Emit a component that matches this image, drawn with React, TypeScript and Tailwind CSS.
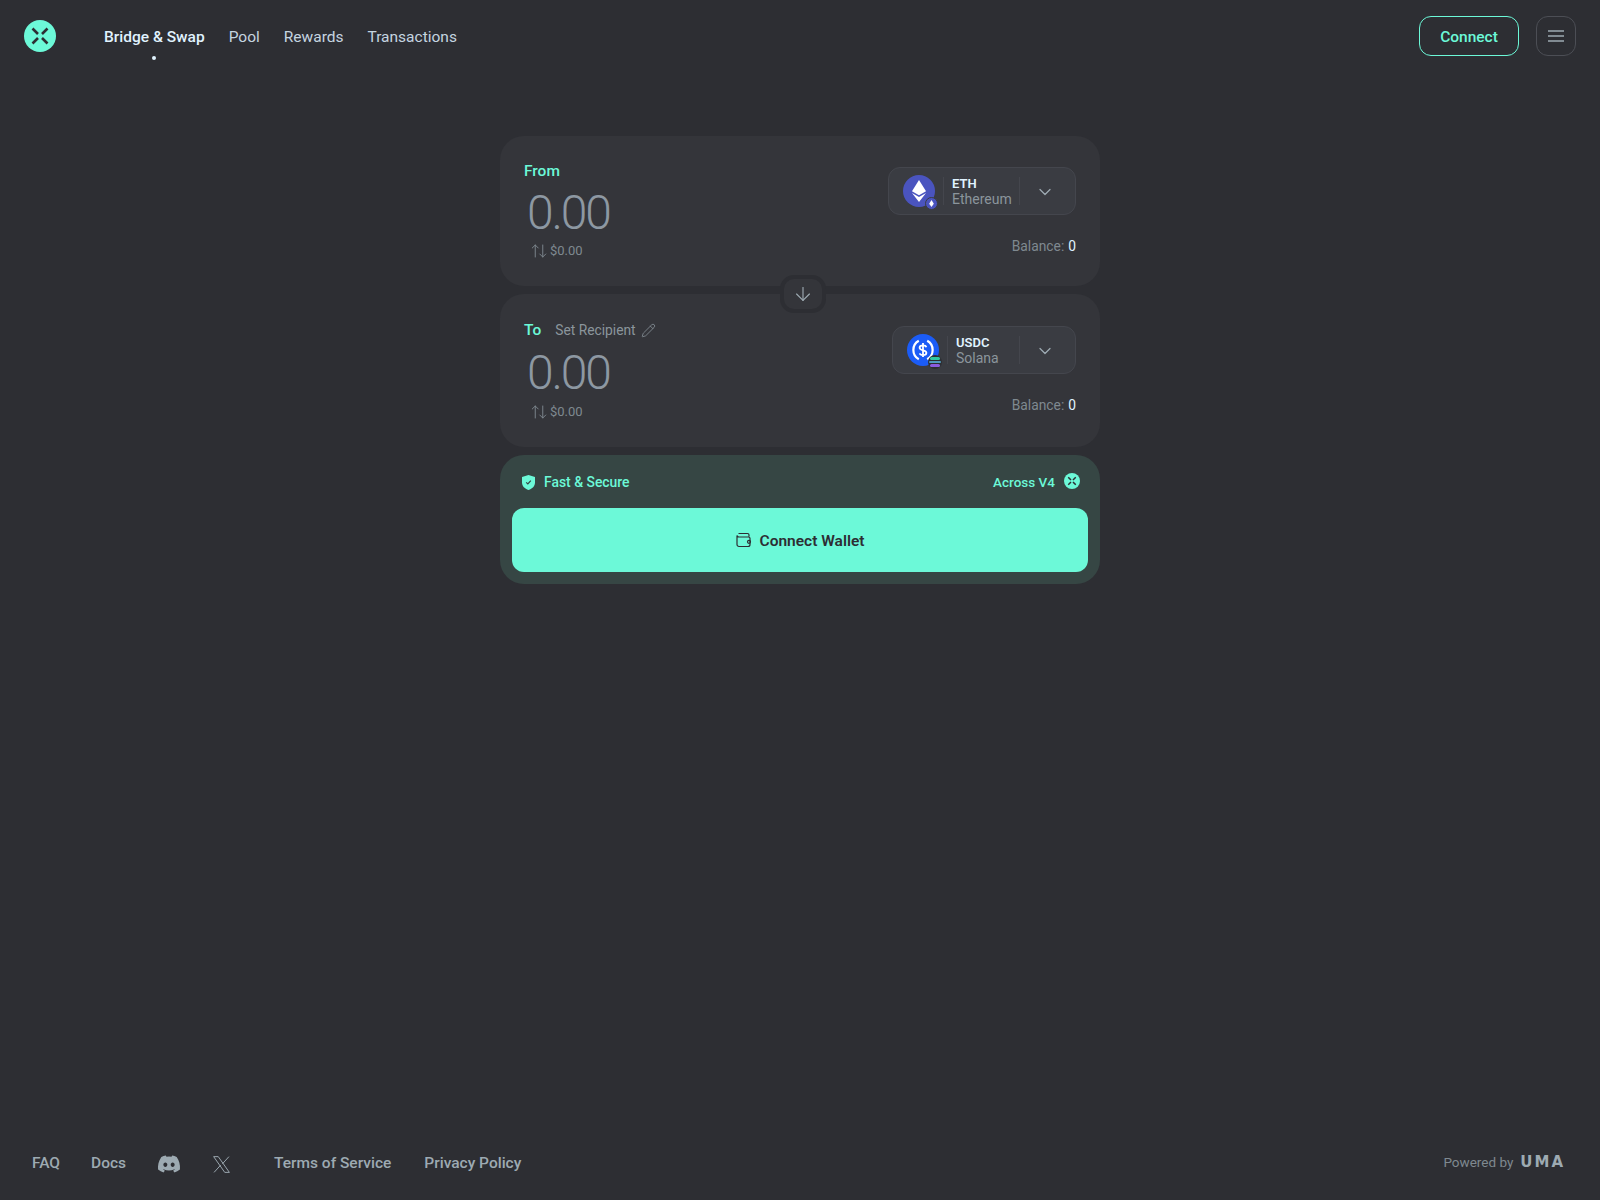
import { ArrowDown, ArrowUpDown, ChevronDown, Pencil } from "lucide-react";
import { FaDiscord } from "react-icons/fa";
import type { ReactNode } from "react";

function AcrossLogo({ className, stroke = 2.6 }: { className: string; stroke?: number }) {
  return (
    <svg viewBox="0 0 32 32" className={className}>
      <circle cx="16" cy="16" r="16" fill="#6cf9d8" />
      <path
        d="M8.5 8.5 14 14M23.5 8.5 18 14M8.5 23.5 14 18M23.5 23.5 18 18"
        stroke="#2d2e33"
        strokeWidth={stroke}
        fill="none"
      />
    </svg>
  );
}

function EthIcon() {
  return (
    <div className="relative h-8 w-8 shrink-0">
      <svg viewBox="0 0 32 32" className="h-8 w-8">
        <circle cx="16" cy="16" r="16" fill="#4a54bf" />
        <path d="M16 5 9 16.2 16 20.2 23 16.2Z" fill="#fff" />
        <path d="M9 18 16 27 23 18 16 22Z" fill="#fff" />
      </svg>
      <div className="absolute -right-[3px] -bottom-[3px] flex h-[13px] w-[13px] items-center justify-center rounded-full border border-[#3a3c42] bg-[#4a54bf]">
        <svg viewBox="0 0 8 12" className="h-[7px] w-[5px]">
          <path d="M4 0 0 6.5 4 12 8 6.5Z" fill="#fff" />
        </svg>
      </div>
    </div>
  );
}

function UsdcIcon() {
  return (
    <div className="relative h-8 w-8 shrink-0">
      <svg viewBox="0 0 32 32" className="h-8 w-8">
        <circle cx="16" cy="16" r="16" fill="#1b5cf6" />
        <path
          d="M11.800 6.800a10.500 10.500 0 0 0 0 18.400M20.200 6.800a10.500 10.500 0 0 1 0 18.400"
          stroke="#fff"
          strokeWidth="2.200"
          fill="none"
        />
        <path
          d="M16 9v14M19.300 13.200c-.3-1.200-1.600-1.800-3.300-1.800-2 0-3.400.9-3.400 2.400 0 3.400 6.800 1.600 6.800 5 0 1.500-1.400 2.400-3.400 2.400-1.700 0-3-.6-3.300-1.800"
          stroke="#fff"
          strokeWidth="1.800"
          fill="none"
        />
      </svg>
      <div className="absolute -right-[3px] -bottom-[3px] flex h-[14px] w-[14px] flex-col items-center justify-center gap-px overflow-hidden rounded-full bg-[#2d2e33]">
        <span className="h-[2.500px] w-[10px] rounded-sm bg-[#2fc9a0]" />
        <span className="h-[2.500px] w-[12px] rounded-sm bg-[#4f9cc0]" />
        <span className="h-[2.500px] w-[10px] rounded-sm bg-[#8a5ce0]" />
      </div>
    </div>
  );
}

function TokenSelect({
  icon,
  symbol,
  chain,
  textWidth,
}: {
  icon: ReactNode;
  symbol: string;
  chain: string;
  textWidth: string;
}) {
  return (
    <div className="flex h-12 items-center rounded-xl border border-[#44464d] bg-[#3a3c42] pl-[14px]">
      {icon}
      <div className="mx-2 h-7 w-px bg-[#44464d]" />
      <div className={`flex flex-col ${textWidth}`}>
        <span className="text-[13px] leading-[15px] font-semibold text-[#e0f3ff]">{symbol}</span>
        <span className="text-sm leading-[16px] text-[#8b959c]">{chain}</span>
      </div>
      <div className="h-7 w-px bg-[#44464d]" />
      <div className="flex w-[55px] items-center justify-center pt-[2px] pr-[6px]">
        <ChevronDown className="h-5 w-5 text-[#9daab2]" strokeWidth={1.5} />
      </div>
    </div>
  );
}

function AmountBlock({
  children,
  amountMt,
  subMt,
}: {
  children?: ReactNode;
  amountMt: string;
  subMt: string;
}) {
  return (
    <div className="flex flex-col">
      {children}
      <div className={`ml-[3px] h-12 text-[48px] leading-[48px] font-light tracking-[-2.200px] text-[#8d98a2] ${amountMt}`}>
        0.00
      </div>
      <div className={`ml-[6px] flex h-5 items-center gap-[2px] text-[13px] text-[#7f8990] ${subMt}`}>
        <ArrowUpDown className="h-[18px] w-[18px]" strokeWidth={1.25} />
        <span>$0.00</span>
      </div>
    </div>
  );
}

function Balance() {
  return (
    <div className="flex h-5 items-center gap-1 text-[13.800px] text-[#7f8990]">
      Balance: <span className="text-[#e0f3ff]">0</span>
    </div>
  );
}

export default function App() {
  return (
    <div
      className="flex min-h-screen flex-col bg-[#2d2e33]"
      style={{ fontFamily: "Roboto, 'Noto Sans', sans-serif" }}
    >
      <header className="flex h-[72px] items-center justify-between px-6">
        <div className="flex items-center gap-12">
          <AcrossLogo className="h-8 w-8" />
          <nav className="flex items-center gap-6 pt-1 text-[15.500px] text-[#c5d5e0]">
            <a className="relative font-medium text-[#e0f3ff]">
              Bridge &amp; Swap
              <span className="absolute -bottom-[10px] left-1/2 h-1 w-1 -translate-x-1/2 rounded-full bg-[#e0f3ff]" />
            </a>
            <a>Pool</a>
            <a>Rewards</a>
            <a>Transactions</a>
          </nav>
        </div>
        <div className="flex items-center gap-[17px]">
          <button className="h-10 w-[100px] rounded-xl border border-[#6cf9d8] pt-[3px] text-[15.500px] font-medium text-[#6cf9d8]">
            Connect
          </button>
          <button className="flex h-10 w-10 items-center justify-center rounded-xl border border-[#4c4e55]">
            <svg viewBox="0 0 16 12" className="h-3 w-4" stroke="#9daab2" strokeWidth="1.500" fill="none">
              <path d="M0 1h16M0 6h16M0 11h16" />
            </svg>
          </button>
        </div>
      </header>

      <main className="flex flex-1 justify-center pt-16">
        <div className="relative flex h-fit w-[600px] flex-col gap-2">
          <section className="flex justify-between rounded-3xl bg-[#34353a] px-6 pt-[25px] pb-[25px]">
            <AmountBlock amountMt="mt-2" subMt="mt-1">
              <div className="flex h-5 items-center pt-[2px] text-[15.500px] font-medium text-[#6cf9d8]">From</div>
            </AmountBlock>
            <div className="flex flex-col items-end gap-[21px] pt-[6px]">
              <TokenSelect icon={<EthIcon />} symbol="ETH" chain="Ethereum" textWidth="w-[67px]" />
              <Balance />
            </div>
          </section>

          <section className="flex justify-between rounded-3xl bg-[#34353a] px-6 pt-[26px] pb-[25px]">
            <AmountBlock amountMt="mt-[9px]" subMt="mt-[5px]">
              <div className="flex h-5 items-center">
                <span className="pt-[2px] text-[15.500px] font-medium text-[#6cf9d8]">To</span>
                <span className="ml-[14px] text-[13.800px] text-[#8b959c]">Set Recipient</span>
                <Pencil className="ml-[5px] h-[15px] w-[15px] text-[#8b959c]" strokeWidth={1.25} />
              </div>
            </AmountBlock>
            <div className="flex flex-col items-end gap-[21px] pt-[6px]">
              <TokenSelect icon={<UsdcIcon />} symbol="USDC" chain="Solana" textWidth="w-[63px]" />
              <Balance />
            </div>
          </section>

          <div className="absolute top-[139px] left-[280px] flex h-[38px] w-[46px] items-center justify-center rounded-[14px] border-4 border-[#2d2e33] bg-[#34353a]">
            <ArrowDown className="h-[22px] w-[22px] text-[#9daab2]" strokeWidth={1.25} />
          </div>

          <section className="flex flex-col rounded-3xl bg-[#364644] px-3 pt-[17px] pb-3">
            <div className="flex h-5 items-center justify-between pr-2 pl-[10px]">
              <div className="flex items-center gap-[9px] text-[13.900px] font-medium text-[#6cf9d8]">
                <svg viewBox="0 0 14 16" className="h-[15px] w-[13px]">
                  <path d="M7 0 14 2.200V8c0 4-3 6.700-7 8-4-1.300-7-4-7-8V2.200Z" fill="#6cf9d8" />
                  <path d="M4.500 7.800 6.300 9.500 9.500 6" stroke="#364644" strokeWidth="1.300" fill="none" />
                </svg>
                Fast &amp; Secure
              </div>
              <div className="flex items-center gap-[9px] text-[13.500px] font-medium text-[#6cf9d8]">
                Across V4
                <AcrossLogo className="-mt-[2px] h-4 w-4" stroke={3} />
              </div>
            </div>
            <button className="mt-4 flex h-16 items-center justify-center gap-2 rounded-xl bg-[#6cf9d8] text-[15.500px] font-semibold text-[#2d2e33]">
              <svg viewBox="0 0 16 16" className="h-4 w-4" stroke="#2d2e33" strokeWidth="1.200" fill="none">
                <path d="M2.500 1.500h9a1.500 1.500 0 0 1 1.500 1.500v1.500M1 3.500a2 2 0 0 0 2 1.500h9.500A1.500 1.500 0 0 1 14 6.500v6a2 2 0 0 1-2 2H3a2 2 0 0 1-2-2Z" />
                <circle cx="13" cy="9.800" r="1.500" />
              </svg>
              <span className="pt-1">Connect Wallet</span>
            </button>
          </section>
        </div>
      </main>

      <footer className="flex items-center justify-between pr-[35px] pb-6 pl-8">
        <div className="flex items-center text-[15.500px] font-medium text-[#9daab2]">
          <a>FAQ</a>
          <a className="ml-[31px]">Docs</a>
          <FaDiscord className="ml-[31px] h-6 w-6" />
          <svg viewBox="0 0 24 24" className="ml-[30px] h-[21px] w-[21px]" fill="none" stroke="#9daab2" strokeWidth="1.100">
            <path d="M3 3h5.300L21 21h-5.300ZM20.500 3l-7.500 8.300M3.500 21l7.700-8.500" />
          </svg>
          <a className="ml-[42px]">Terms of Service</a>
          <a className="ml-[33px]">Privacy Policy</a>
        </div>
        <div className="-mt-[4px] flex items-center gap-[7px] text-[13.500px] text-[#7f8990]">
          Powered by
          <span
            className="text-[15px] leading-none font-bold tracking-[2px] text-[#9daab2]"
            style={{ fontFamily: "'DejaVu Sans', sans-serif" }}
          >
            UMA
          </span>
        </div>
      </footer>
    </div>
  );
}
